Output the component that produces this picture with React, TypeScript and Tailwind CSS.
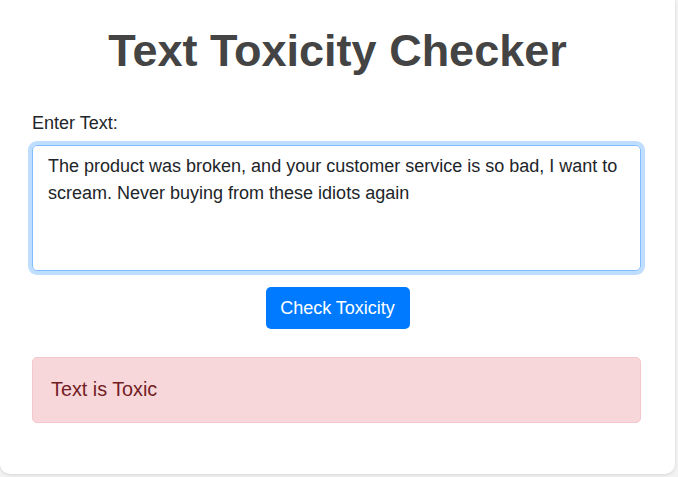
import { useEffect, useRef, useState } from "react"

export default function App() {
  const [text, setText] = useState(
    "The product was broken, and your customer service is so bad, I want to scream. Never buying from these idiots again"
  )
  const [result] = useState("Text is Toxic")
  const areaRef = useRef<HTMLTextAreaElement>(null)

  useEffect(() => {
    const el = areaRef.current
    if (el) {
      el.focus()
      el.setSelectionRange(el.value.length, el.value.length)
    }
  }, [])

  return (
    <div className="min-h-[477px] bg-[#f2f2f2] font-['Liberation_Sans',Arial,sans-serif]">
      <div className="w-[675px] bg-white rounded-b-[10px] shadow-[0_1px_3px_rgba(0,0,0,0.12)] px-8 pt-[24px] pb-[51px]">
        <h1 className="text-center text-[45px] leading-[1.2] font-bold text-[#444]">
          Text Toxicity Checker
        </h1>

        <label className="block mt-[32px] text-[18px] leading-[1.5] text-[#212529]">
          Enter Text:
        </label>
        <textarea
          ref={areaRef}
          value={text}
          onChange={(e) => setText(e.target.value)}
          className="block mt-[8px] w-[609px] h-[126px] resize-none rounded-[5px] border border-[#80bdff] shadow-[0_0_0_4px_rgba(0,123,255,0.25)] outline-none pt-[7px] px-[15px] text-[18px] leading-[1.5] text-[#212529] caret-black font-['Liberation_Sans',Arial,sans-serif]"
        />

        <div className="flex justify-center mt-[16px]">
          <button className="w-[144px] h-[42px] rounded-[5px] bg-[#007bff] text-white text-[18px] flex items-center justify-center">
            Check Toxicity
          </button>
        </div>

        <div className="mt-[28px] w-[609px] h-[66px] flex items-center px-[18px] rounded-[5px] border border-[#f5c6cb] bg-[#f8d7da] text-[#721c24] text-[19.8px]">
          {result}
        </div>
      </div>
    </div>
  )
}
